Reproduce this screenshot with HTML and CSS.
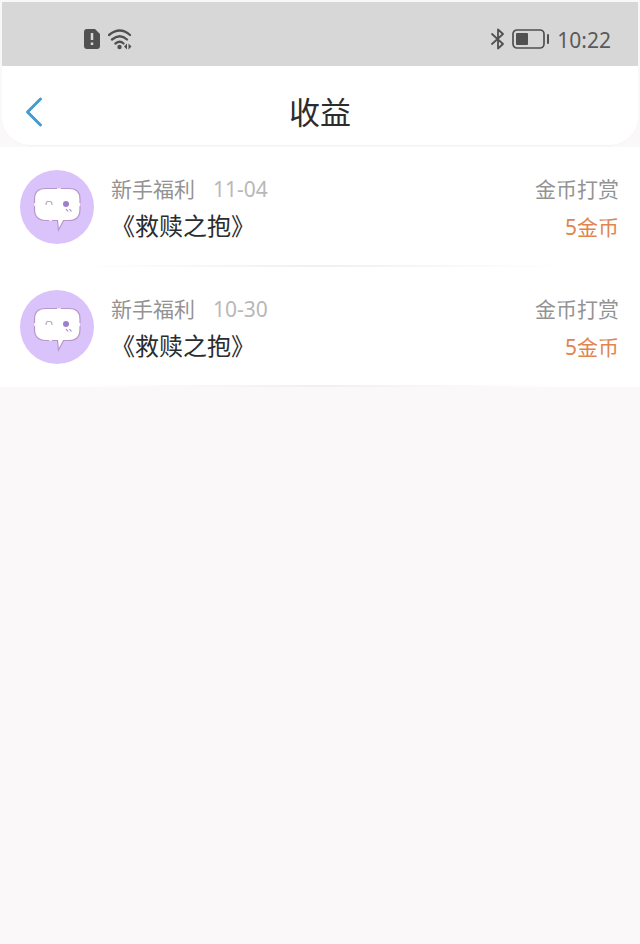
FILE: index.html
```
<!DOCTYPE html>
<html lang="zh-CN">
<head>
    <meta charset="UTF-8">
    <meta name="viewport" content="width=device-width, initial-scale=1.0">
    <title>收益</title>
    <link rel="stylesheet" href="styles.css">
</head>
<body>
    <svg class="symbols" aria-hidden="true">
        <symbol id="avatar" viewBox="0 0 74 74">
            <circle cx="37" cy="37" r="37" fill="#dac3fb"/>
            <path d="M26 18.500H49Q60 18.500 60 29V39Q60 50.500 49 50.500H43.500L38.500 60L37.500 50.500H26Q14.500 50.500 14.500 39V29Q14.500 18.500 26 18.500Z" fill="#fff" stroke="#b796cb" stroke-width="1.200"/>
            <path d="M37 18.800H41M59.700 33V36M14.800 33V36M29 50.200H32" fill="none" stroke="#fff" stroke-width="1.200"/>
            <path d="M26 35Q26 31.500 28 31.500H30Q32 31.500 32 35" fill="none" stroke="#b9a9bd" stroke-width="1.200"/>
            <circle cx="46" cy="34" r="3" fill="#9f7fc9"/>
            <path d="M46 39L48 41.500M49.500 39L51.500 41.500" fill="none" stroke="#a98bbb" stroke-width="1.200"/>
        </symbol>
    </svg>

    <div class="status-bar">
        <div class="status-group">
            <svg width="17" height="20" viewBox="0 0 17 20" aria-hidden="true">
                <path d="M3 0H11L16 5V17Q16 20 13 20H3Q0 20 0 17V3Q0 0 3 0Z" fill="#505050"/>
                <path d="M8 4V11M8 13.500V16" stroke="#d7d7d7" stroke-width="2.500"/>
            </svg>
            <svg width="24" height="21" viewBox="0 0 24 21" aria-hidden="true">
                <path d="M1 6Q12 -3 22 6M4 10.500Q12 4 19 10.500M7.500 14.500Q12 11 15.500 14.500" fill="none" stroke="#505050" stroke-width="2.300" stroke-linecap="round"/>
                <circle cx="11.500" cy="18" r="2.200" fill="#505050"/>
                <path d="M19 14.500V20.500L16 17.500ZM20.500 14.500V20.500L23.500 17.500Z" fill="#505050"/>
            </svg>
        </div>
        <div class="status-group">
            <svg width="14" height="22" viewBox="0 0 14 22" aria-hidden="true">
                <path d="M1 6L12 16L7 20.500V1.500L12 6L1 16" fill="none" stroke="#505050" stroke-width="1.800" stroke-linejoin="round" stroke-linecap="round"/>
            </svg>
            <svg width="38" height="20" viewBox="0 0 38 20" aria-hidden="true">
                <rect x="1" y="1" width="31" height="18" rx="4" fill="none" stroke="#505050" stroke-width="1.700"/>
                <rect x="4" y="4" width="12" height="12" rx="1" fill="#505050"/>
                <rect x="35" y="5" width="2" height="10" rx="1" fill="#505050"/>
            </svg>
            <time class="clock">10:22</time>
        </div>
    </div>

    <header class="header">
        <button class="back" type="button" aria-label="返回">
            <svg width="18" height="32" viewBox="0 0 18 32" aria-hidden="true">
                <path d="M15.500 3L2.500 16L15.500 29" fill="none" stroke="#459bd0" stroke-width="3" stroke-linecap="round" stroke-linejoin="round"/>
            </svg>
        </button>
        <h1 class="title">收益</h1>
    </header>

    <ul class="list">
        <li class="item">
            <svg class="avatar" aria-hidden="true"><use href="#avatar"/></svg>
            <div class="info">
                <div class="meta"><span>新手福利</span><time class="date">11-04</time></div>
                <div class="book">《救赎之抱》</div>
            </div>
            <div class="reward">
                <div>金币打赏</div>
                <div class="coins">5金币</div>
            </div>
        </li>
        <li class="item">
            <svg class="avatar" aria-hidden="true"><use href="#avatar"/></svg>
            <div class="info">
                <div class="meta"><span>新手福利</span><time class="date">10-30</time></div>
                <div class="book">《救赎之抱》</div>
            </div>
            <div class="reward">
                <div>金币打赏</div>
                <div class="coins">5金币</div>
            </div>
        </li>
    </ul>
</body>
</html>
```
FILE: styles.css
```
* {
    box-sizing: border-box;
}

body {
    margin: 0;
    background-color: #faf8f9;
    color: #2c2c2c;
    font-family: "Noto Sans", "Noto Sans CJK SC", sans-serif;
}

.symbols {
    display: none;
}

.status-bar {
    display: flex;
    justify-content: space-between;
    align-items: center;
    height: 66px;
    padding: 10px 27px 0 82px;
    background-color: #d7d7d7;
    border: 2px solid #f8f8f8;
    border-bottom: none;
    color: #5a5a5a;
}

.status-group {
    display: flex;
    align-items: center;
    gap: 7px;
}

.clock {
    padding-top: 2px;
    font-size: 21px;
    line-height: 24px;
}

.header {
    display: grid;
    grid-template-columns: 48px 1fr 48px;
    align-items: center;
    height: 80px;
    margin: 0 2px 1px;
    padding: 12px 8px 0;
    background-color: #fff;
    border-bottom: 1px solid #f4f2f3;
    border-radius: 0 0 28px 28px;
}

.back {
    display: flex;
    justify-content: center;
    padding: 0;
    border: none;
    background: none;
    cursor: pointer;
}

.title {
    margin: 0;
    font-size: 31px;
    font-weight: 400;
    line-height: 40px;
    text-align: center;
}

.list {
    margin: 0;
    padding: 0;
    list-style: none;
    background-color: #fff;
}

.item {
    display: flex;
    align-items: flex-start;
    height: 120px;
    padding: 23px 21px 0 20px;
    background: linear-gradient(90deg, transparent 12%, #f0f0f0 50%, transparent 88%) no-repeat 0 118px / 100% 2px;
}

.avatar {
    width: 74px;
    height: 74px;
    margin-right: 17px;
}

.info {
    flex: 1;
}

.meta,
.reward {
    color: #939393;
    font-size: 21px;
    line-height: 38px;
}

.meta {
    display: flex;
    gap: 18px;
}

.date {
    color: #b8b8b8;
}

.book {
    font-size: 24px;
    line-height: 36px;
}

.reward {
    text-align: right;
}

.coins {
    color: #e0854f;
}
```
